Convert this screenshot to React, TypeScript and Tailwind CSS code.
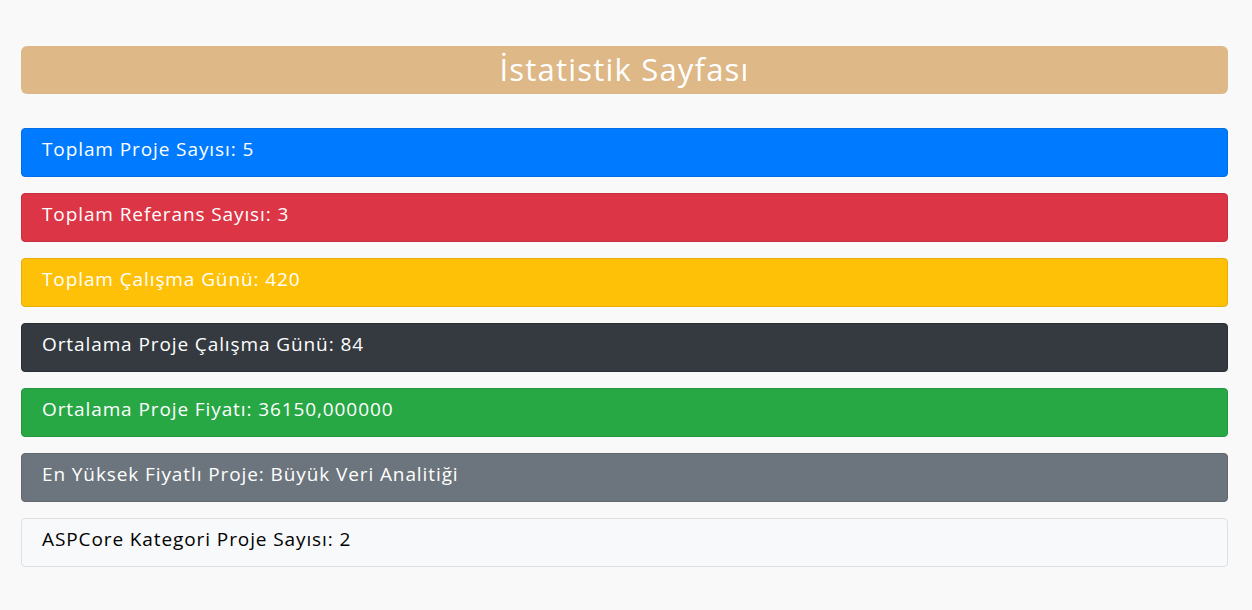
import React from "react";

const rows: { text: string; cls: string }[] = [
  { text: "Toplam Proje Sayısı: 5", cls: "bg-[#007bff] border-[#006fe6] text-white" },
  { text: "Toplam Referans Sayısı: 3", cls: "bg-[#dc3545] border-[#c62f3e] text-white" },
  { text: "Toplam Çalışma Günü: 420", cls: "bg-[#ffc107] border-[#e6ad06] text-white" },
  { text: "Ortalama Proje Çalışma Günü: 84", cls: "bg-[#343a40] border-[#2a2f34] text-white" },
  { text: "Ortalama Proje Fiyatı: 36150,000000", cls: "bg-[#28a745] border-[#24963e] text-white" },
  { text: "En Yüksek Fiyatlı Proje: Büyük Veri Analitiği", cls: "bg-[#6c757d] border-[#61696f] text-white" },
  { text: "ASPCore Kategori Proje Sayısı: 2", cls: "bg-[#f8f9fa] border-[#dfe0e1] text-black" },
];

export default function App() {
  return (
    <div
      className="min-h-[610px] w-full bg-[#f9f9f9] pl-[21px] pr-[24px] pt-[46px]"
      style={{ fontFamily: '"Open Sans", "Liberation Sans", sans-serif' }}
    >
      <div className="flex h-[48px] items-center justify-center rounded-[6px] bg-[#deb887] pb-[2px] text-[31px] tracking-[1.2px] text-white">
        İstatistik Sayfası
      </div>
      <div className="mt-[34px] flex flex-col gap-[16px]">
        {rows.map((r) => (
          <div
            key={r.text}
            className={`flex h-[49px] items-center rounded-[4px] border pl-[20px] pb-[7px] text-[19px] tracking-[0.9px] ${r.cls}`}
          >
            {r.text}
          </div>
        ))}
      </div>
    </div>
  );
}
